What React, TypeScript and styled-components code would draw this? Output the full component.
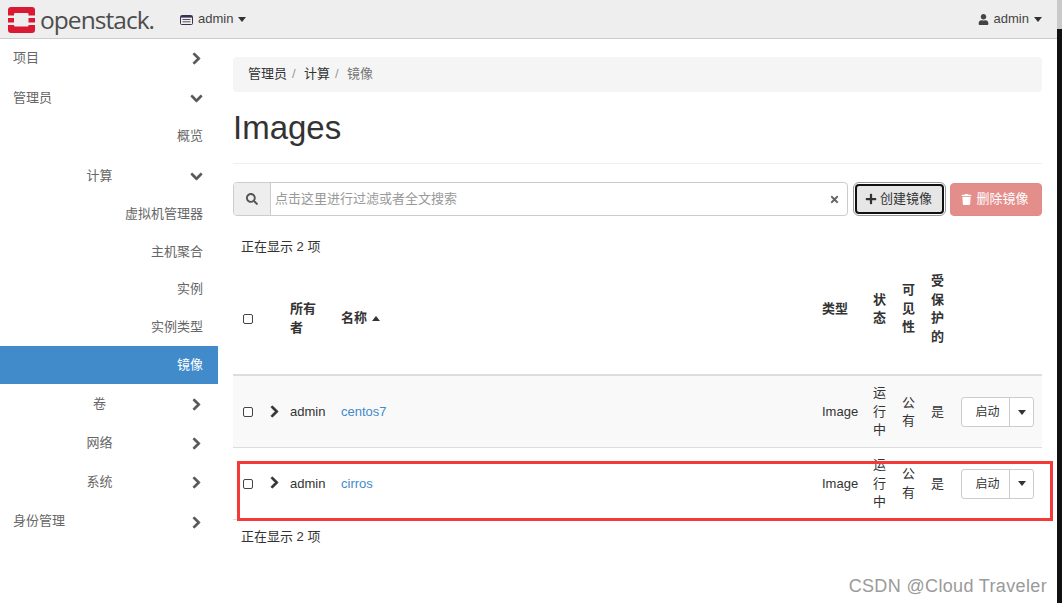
import React from 'react';
import styled, { createGlobalStyle } from 'styled-components';
import {
  FaChevronDown,
  FaChevronRight,
  FaPlus,
  FaSearch,
  FaTimes,
  FaTrash,
  FaUser
} from 'react-icons/fa';

const GlobalStyle = createGlobalStyle`
  html, body {
    margin: 0;
    padding: 0;
    overflow: hidden;
  }
  body {
    font-family: "Liberation Sans", "Noto Sans CJK SC", sans-serif;
    font-size: 13px;
    line-height: 18.57px;
    color: #333;
    background: #fff;
  }
  * {
    box-sizing: border-box;
  }
`;

const Shell = styled.div`
  position: relative;
  display: flex;
  width: 1062px;
  height: 603px;
  overflow: hidden;
`;

const Page = styled.div`
  flex: 1;
  min-width: 0;
  display: flex;
  flex-direction: column;
`;

const WindowEdge = styled.div`
  width: 5px;
  background: #111;
  border-top: 29px solid #c9c9c9;
`;

const Navbar = styled.header`
  height: 39px;
  display: flex;
  align-items: center;
  padding: 1px 15px 0 8px;
  background: #eee;
  border-bottom: 1px solid #ccc;
`;

const Brand = styled.div`
  display: flex;
  align-items: center;
  gap: 5px;
  width: 172px;
`;

const BrandName = styled.span`
  font-family: "Open Sans", sans-serif;
  font-size: 24.5px;
  letter-spacing: -0.95px;
  line-height: 30px;
  color: #4d4d4d;
`;

const NavMenu = styled.div`
  display: flex;
  align-items: center;
  gap: 5px;
  color: #444;
`;

const Spacer = styled.div`
  flex: 1;
`;

const Caret = styled.span<{ $up?: boolean }>`
  display: inline-block;
  width: 0;
  height: 0;
  border-left: 4px solid transparent;
  border-right: 4px solid transparent;
  ${p => (p.$up ? 'border-bottom: 5px solid #333;' : 'border-top: 5px solid #333;')}
`;

const Body = styled.div`
  flex: 1;
  display: flex;
  min-height: 0;
`;

const Sidebar = styled.nav`
  width: 218px;
  flex-shrink: 0;
  color: #666;
`;

const SideRow = styled.div<{ $height: number; $shift?: number; $active?: boolean }>`
  height: ${p => p.$height}px;
  display: flex;
  align-items: center;
  padding: ${p => p.$shift || 0}px 17px 0 0;
  background: ${p => (p.$active ? '#428bca' : 'transparent')};
  color: ${p => (p.$active ? '#fff' : 'inherit')};
`;

const ChevronRight = styled(FaChevronRight)`
  width: 9px;
  height: 13px;
  margin-top: 1px;
  flex-shrink: 0;
  color: #555;
  stroke: currentColor;
  stroke-width: 36px;
`;

const ChevronDown = styled(FaChevronDown)`
  width: 13px;
  height: 13px;
  margin: 1px -2px 0;
  flex-shrink: 0;
  color: #555;
  stroke: currentColor;
  stroke-width: 36px;
`;

const TopLabel = styled.span`
  flex: 1;
  padding-left: 13px;
`;

const GroupLabel = styled.span`
  flex: 1;
  padding-left: 7px;
  text-align: center;
`;

const LeafLabel = styled.span`
  flex: 1;
  margin-right: -2px;
  text-align: right;
`;

const Main = styled.main`
  flex: 1;
  min-width: 0;
  padding: 18px 15px 0;
`;

const Breadcrumb = styled.ol`
  display: flex;
  height: 35px;
  align-items: center;
  margin: 0;
  padding: 0 15px;
  list-style: none;
  background: #f5f5f5;
  border-radius: 4px;
`;

const Crumb = styled.li<{ $current?: boolean }>`
  color: ${p => (p.$current ? '#777' : '#333')};
`;

const CrumbDivider = styled.span`
  padding: 0 8.4px 0 5px;
  color: #999;
`;

const PageHeader = styled.div`
  margin-top: 18px;
  height: 54px;
  border-bottom: 1px solid #eee;
`;

const Title = styled.h1`
  margin: 0;
  font-size: 33px;
  font-weight: 400;
  line-height: 36px;
`;

const Toolbar = styled.div`
  display: flex;
  align-items: center;
  margin-top: 18px;
`;

const FilterGroup = styled.div`
  flex: 1;
  height: 34px;
  display: flex;
  border: 1px solid #ccc;
  border-radius: 4px;
  overflow: hidden;
`;

const FilterAddon = styled.span`
  width: 37px;
  display: flex;
  align-items: center;
  justify-content: center;
  background: #eee;
  border-right: 1px solid #ccc;
  color: #555;
  svg {
    width: 12px;
    height: 12px;
  }
`;

const FilterInput = styled.div`
  flex: 1;
  display: flex;
  align-items: center;
  justify-content: space-between;
  padding: 0 7px 0 4px;
  color: #999;
  svg {
    width: 11px;
    height: 11px;
    color: #666;
  }
`;

const ActionButton = styled.button<{ $danger?: boolean }>`
  display: flex;
  align-items: center;
  justify-content: center;
  padding: 0 2px 0 0;
  font: inherit;
  border-radius: 4px;
  ${p =>
    p.$danger
      ? `
    width: 92px;
    height: 33px;
    gap: 4px;
    margin-left: 6px;
    color: #fff;
    background: #e48e8b;
    border: 1px solid #e38a87;
    svg {
      width: 11px;
      height: 11px;
    }
  `
      : `
    width: 89px;
    height: 30px;
    gap: 3px;
    margin-left: 7px;
    color: #333;
    background: #e6e6e6;
    border: 2px solid #111;
    outline: 1px solid #999;
    outline-offset: 1px;
    svg {
      width: 12px;
      height: 12px;
    }
  `}
`;

const CountText = styled.div`
  height: 49px;
  padding: 22px 8px 0;
`;

const ImageTable = styled.table`
  width: 809px;
  border-collapse: collapse;
  table-layout: fixed;
`;

const HeadCell = styled.th<{ $raised?: boolean }>`
  padding: 7px 8px ${p => (p.$raised ? 28 : 9)}px;
  font-weight: 700;
  text-align: left;
  vertical-align: middle;
  border-bottom: 2px solid #ddd;
`;

const Row = styled.tr<{ $striped?: boolean }>`
  background: ${p => (p.$striped ? '#f9f9f9' : 'transparent')};
`;

const Cell = styled.td<{ $tight?: boolean }>`
  padding: 8px ${p => (p.$tight ? 0 : 8)}px 7px 8px;
  vertical-align: middle;
  border-bottom: 1px solid #ddd;
`;

const FooterCell = styled.td`
  padding: 8px;
`;

const Checkbox = styled.span`
  display: block;
  width: 10px;
  height: 10px;
  margin-left: 2px;
  border: 1px solid #444;
  border-radius: 2px;
  background: #fff;
`;

const RowToggle = styled.span`
  display: block;
  margin-top: -2px;
  svg {
    display: block;
    width: 9px;
    height: 13px;
    color: #333;
    stroke: currentColor;
    stroke-width: 36px;
  }
`;

const SortHead = styled.span`
  display: inline-flex;
  align-items: center;
  gap: 5px;
`;

const ImageLink = styled.a`
  color: #428bca;
  text-decoration: none;
`;

const SplitButton = styled.div`
  display: flex;
  width: 73px;
  height: 30px;
  margin-left: 1px;
  background: #fff;
  border: 1px solid #ccc;
  border-radius: 3px;
`;

const SplitMain = styled.span`
  width: 48px;
  display: flex;
  align-items: center;
  justify-content: center;
  padding-left: 4px;
  font-size: 12px;
  border-right: 1px solid #ccc;
`;

const SplitToggle = styled.span`
  flex: 1;
  display: flex;
  align-items: center;
  justify-content: center;
`;

const Highlight = styled.div`
  position: absolute;
  left: 237px;
  top: 461px;
  width: 816px;
  height: 60px;
  border: 3px solid #f53838;
  pointer-events: none;
`;

const Watermark = styled.div`
  position: absolute;
  right: 15px;
  top: 575px;
  font-size: 18px;
  line-height: 22px;
  letter-spacing: 0.35px;
  color: #9a9a9a;
`;

function Logo() {
  return (
    <svg width="27" height="26" viewBox="0 0 27 26" aria-hidden="true">
      <rect width="27" height="26" rx="3" fill="#da1a32" />
      <rect x="6" y="6" width="14.5" height="13.5" rx="1" fill="#eee" />
      <rect y="8.5" width="6.5" height="2.5" fill="#eee" />
      <rect y="15.5" width="6.5" height="2.5" fill="#eee" />
      <rect x="20" y="8.5" width="7" height="2.5" fill="#eee" />
      <rect x="20" y="15.5" width="7" height="2.5" fill="#eee" />
    </svg>
  );
}

function ProjectIcon() {
  return (
    <svg width="13" height="10" viewBox="0 0 13 10" aria-hidden="true">
      <rect x="0.5" y="0.5" width="12" height="9" rx="1" fill="none" stroke="#3c2f57" />
      <rect x="1" y="1" width="11" height="1.6" fill="#3c2f57" />
      <rect x="2.5" y="4" width="8" height="1" fill="#555" />
      <rect x="2.5" y="6.3" width="8" height="1" fill="#555" />
    </svg>
  );
}

function ImageRow(props: { name: string; striped?: boolean }) {
  const { name, striped } = props;
  return (
    <Row $striped={striped}>
      <Cell $tight>
        <Checkbox />
      </Cell>
      <Cell $tight>
        <RowToggle>
          <FaChevronRight />
        </RowToggle>
      </Cell>
      <Cell>admin</Cell>
      <Cell>
        <ImageLink href="#">{name}</ImageLink>
      </Cell>
      <Cell>Image</Cell>
      <Cell>运行中</Cell>
      <Cell>公有</Cell>
      <Cell>是</Cell>
      <Cell>
        <SplitButton>
          <SplitMain>启动</SplitMain>
          <SplitToggle>
            <Caret />
          </SplitToggle>
        </SplitButton>
      </Cell>
    </Row>
  );
}

export default function App() {
  return (
    <Shell>
      <GlobalStyle />
      <Page>
        <Navbar>
          <Brand>
            <Logo />
            <BrandName>openstack.</BrandName>
          </Brand>
          <NavMenu>
            <ProjectIcon />
            admin
            <Caret />
          </NavMenu>
          <Spacer />
          <NavMenu>
            <FaUser size={11} />
            admin
            <Caret />
          </NavMenu>
        </Navbar>
        <Body>
          <Sidebar>
            <SideRow $height={38}>
              <TopLabel>项目</TopLabel>
              <ChevronRight />
            </SideRow>
            <SideRow $height={40} $shift={2}>
              <TopLabel>管理员</TopLabel>
              <ChevronDown />
            </SideRow>
            <SideRow $height={38}>
              <LeafLabel>概览</LeafLabel>
            </SideRow>
            <SideRow $height={40} $shift={2}>
              <GroupLabel>计算</GroupLabel>
              <ChevronDown />
            </SideRow>
            <SideRow $height={38}>
              <LeafLabel>虚拟机管理器</LeafLabel>
            </SideRow>
            <SideRow $height={38}>
              <LeafLabel>主机聚合</LeafLabel>
            </SideRow>
            <SideRow $height={37}>
              <LeafLabel>实例</LeafLabel>
            </SideRow>
            <SideRow $height={38}>
              <LeafLabel>实例类型</LeafLabel>
            </SideRow>
            <SideRow $height={38} $active>
              <LeafLabel>镜像</LeafLabel>
            </SideRow>
            <SideRow $height={39} $shift={1}>
              <GroupLabel>卷</GroupLabel>
              <ChevronRight />
            </SideRow>
            <SideRow $height={39} $shift={1}>
              <GroupLabel>网络</GroupLabel>
              <ChevronRight />
            </SideRow>
            <SideRow $height={39} $shift={1}>
              <GroupLabel>系统</GroupLabel>
              <ChevronRight />
            </SideRow>
            <SideRow $height={40} $shift={1}>
              <TopLabel>身份管理</TopLabel>
              <ChevronRight />
            </SideRow>
          </Sidebar>
          <Main>
            <Breadcrumb>
              <Crumb>
                管理员<CrumbDivider>/</CrumbDivider>
              </Crumb>
              <Crumb>
                计算<CrumbDivider>/</CrumbDivider>
              </Crumb>
              <Crumb $current>镜像</Crumb>
            </Breadcrumb>
            <PageHeader>
              <Title>Images</Title>
            </PageHeader>
            <Toolbar>
              <FilterGroup>
                <FilterAddon>
                  <FaSearch />
                </FilterAddon>
                <FilterInput>
                  点击这里进行过滤或者全文搜索
                  <FaTimes />
                </FilterInput>
              </FilterGroup>
              <ActionButton>
                <FaPlus />
                创建镜像
              </ActionButton>
              <ActionButton $danger>
                <FaTrash />
                删除镜像
              </ActionButton>
            </Toolbar>
            <CountText>正在显示 2 项</CountText>
            <ImageTable>
              <colgroup>
                <col width="29" />
                <col width="20" />
                <col width="51" />
                <col width="481" />
                <col width="51" />
                <col width="29" />
                <col width="29" />
                <col width="29" />
                <col width="90" />
              </colgroup>
              <thead>
                <tr>
                  <HeadCell>
                    <Checkbox />
                  </HeadCell>
                  <HeadCell />
                  <HeadCell>所有者</HeadCell>
                  <HeadCell>
                    <SortHead>
                      名称
                      <Caret $up />
                    </SortHead>
                  </HeadCell>
                  <HeadCell $raised>类型</HeadCell>
                  <HeadCell $raised>状态</HeadCell>
                  <HeadCell $raised>可见性</HeadCell>
                  <HeadCell $raised>受保护的</HeadCell>
                  <HeadCell />
                </tr>
              </thead>
              <tbody>
                <ImageRow name="centos7" striped />
                <ImageRow name="cirros" />
              </tbody>
              <tfoot>
                <tr>
                  <FooterCell colSpan={9}>正在显示 2 项</FooterCell>
                </tr>
              </tfoot>
            </ImageTable>
          </Main>
        </Body>
      </Page>
      <WindowEdge />
      <Highlight />
      <Watermark>CSDN @Cloud Traveler</Watermark>
    </Shell>
  );
}
